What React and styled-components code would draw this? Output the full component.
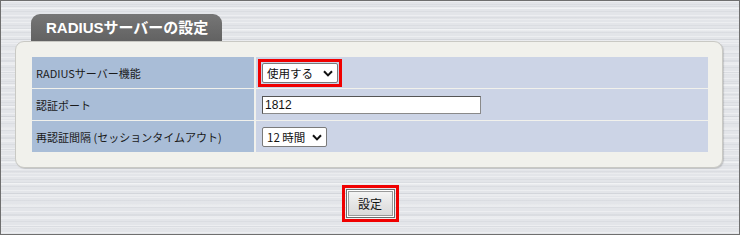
import styled, { createGlobalStyle } from 'styled-components';

const GlobalStyle = createGlobalStyle`
  html, body {
    margin: 0;
    padding: 0;
  }
  body {
    font-family: "Liberation Sans", "Noto Sans CJK JP", sans-serif;
    color: #1a1a1a;
  }
`;

const Frame = styled.div`
  box-sizing: border-box;
  width: 740px;
  height: 235px;
  border: 1px solid #6f6f6f;
  padding-top: 13px;
  display: flex;
  flex-direction: column;
  background-color: #e3e5e9;
  background-image:
    repeating-linear-gradient(180deg,
      rgba(255, 255, 255, 0.35) 0 1px,
      rgba(0, 0, 0, 0) 1px 3px,
      rgba(120, 126, 138, 0.08) 3px 4px,
      rgba(0, 0, 0, 0) 4px 7px),
    repeating-linear-gradient(180deg,
      rgba(0, 0, 0, 0) 0 5px,
      rgba(110, 116, 128, 0.07) 5px 6px,
      rgba(255, 255, 255, 0.25) 6px 8px,
      rgba(0, 0, 0, 0) 8px 11px);
`;

const Tab = styled.div`
  box-sizing: border-box;
  margin-left: 30px;
  width: 191px;
  height: 27px;
  padding: 3px 0 0 15px;
  border-radius: 9px 9px 0 0;
  background: linear-gradient(180deg, #767676 0%, #626262 100%);
  color: #fff;
  font-family: "Liberation Sans", "Noto Sans CJK JP", sans-serif;
  font-weight: bold;
  font-size: 15px;
  line-height: 22px;
  white-space: nowrap;
`;

const Panel = styled.div`
  box-sizing: border-box;
  margin-left: 14px;
  width: 708px;
  padding: 15px 14px 15px 16px;
  border: 1px solid #c9c9c4;
  border-radius: 9px;
  background: #f1f1ec;
  box-shadow: 1px 1px 1px rgba(90, 90, 90, 0.25);
`;

const SettingsGrid = styled.div`
  display: grid;
  grid-template-columns: 222px 452px;
  grid-auto-rows: 31px;
  column-gap: 2px;
  row-gap: 1px;
`;

const LabelCell = styled.div`
  display: flex;
  align-items: center;
  padding-left: 4px;
  background: #a9bdd7;
  font-family: "Noto Sans CJK JP", sans-serif;
  font-size: 11px;
  color: #1a1a1a;
  white-space: nowrap;
`;

const ValueCell = styled.div`
  display: flex;
  align-items: center;
  padding-left: 6px;
  background: #ccd4e6;
`;

const Highlight = styled.div`
  display: inline-flex;
  margin: -4px;
  padding: 1px;
  border: 3px solid #f00000;
`;

const SelectWrap = styled.div`
  position: relative;
  display: inline-flex;
  width: ${p => p.$width}px;
  height: 20px;
`;

const Select = styled.select`
  box-sizing: border-box;
  appearance: none;
  width: 100%;
  height: 100%;
  margin: 0;
  padding: 0 0 0 4px;
  border: 1px solid #7a7a7a;
  border-radius: 2px;
  background: #fff;
  font-family: "Noto Sans CJK JP", sans-serif;
  font-size: 11.5px;
  color: #111;
`;

const Chevron = styled.svg`
  position: absolute;
  right: 5px;
  top: 7px;
  pointer-events: none;
`;

const TextInput = styled.input`
  box-sizing: border-box;
  width: 219px;
  height: 18px;
  margin: 0;
  padding: 0 2px;
  border: 1px solid #8a8a8a;
  border-top-color: #555;
  border-left-color: #555;
  background: #fff;
  font-family: "Liberation Sans", sans-serif;
  font-size: 12px;
  color: #111;
`;

const Footer = styled.div`
  display: flex;
  justify-content: center;
  margin-top: 17px;
`;

const ButtonMark = styled.div`
  display: inline-flex;
  padding: 1px;
  border: 3px solid #f00000;
`;

const Button = styled.button`
  box-sizing: border-box;
  width: 49px;
  height: 29px;
  margin: 0;
  padding: 0;
  border: 1px solid #6c6c6c;
  box-shadow: inset 1px 1px 0 #fff, inset -1px -1px 0 #fff, inset 2px 2px 0 #9a9a9a, inset -2px -2px 0 #9a9a9a;
  background: linear-gradient(180deg, #f6f6f6 0%, #e4e4e4 55%, #d8d8d8 100%);
  font-family: "Noto Sans CJK JP", sans-serif;
  font-size: 12px;
  color: #111;
`;

const ChevronIcon = () => (
  <Chevron width="10" height="7" viewBox="0 0 10 7">
    <path d="M1 1.2 L5 5.4 L9 1.2" fill="none" stroke="#111" strokeWidth="2" />
  </Chevron>
);

const Dropdown = ({ width, value, options }) => (
  <SelectWrap $width={width}>
    <Select defaultValue={value}>
      {options.map(o => <option key={o}>{o}</option>)}
    </Select>
    <ChevronIcon />
  </SelectWrap>
);

export default function App() {
  return (
    <>
      <GlobalStyle />
      <Frame>
        <Tab>RADIUSサーバーの設定</Tab>
        <Panel>
          <SettingsGrid>
            <LabelCell>RADIUSサーバー機能</LabelCell>
            <ValueCell>
              <Highlight>
                <Dropdown width={76} value="使用する" options={['使用する', '使用しない']} />
              </Highlight>
            </ValueCell>

            <LabelCell>認証ポート</LabelCell>
            <ValueCell>
              <TextInput type="text" defaultValue="1812" />
            </ValueCell>

            <LabelCell>再認証間隔 (セッションタイムアウト)</LabelCell>
            <ValueCell>
              <Dropdown width={65} value="12 時間" options={['1 時間', '6 時間', '12 時間', '24 時間']} />
            </ValueCell>
          </SettingsGrid>
        </Panel>
        <Footer>
          <ButtonMark>
            <Button type="button">設定</Button>
          </ButtonMark>
        </Footer>
      </Frame>
    </>
  );
}
